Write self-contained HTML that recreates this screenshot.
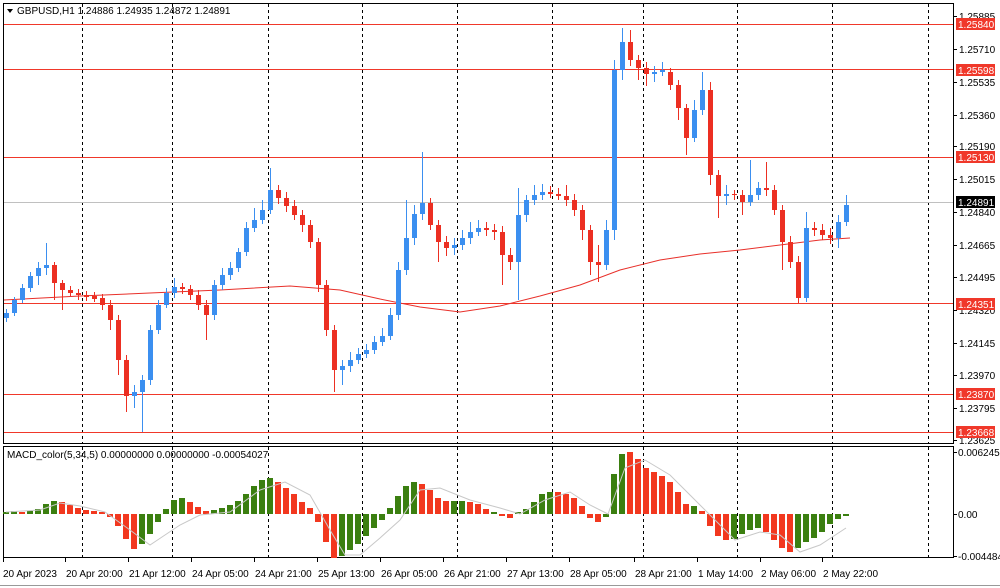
<!DOCTYPE html>
<html><head><meta charset="utf-8"><style>
html,body{margin:0;padding:0;background:#fff;width:1000px;height:588px;overflow:hidden}
svg{display:block;font-family:"Liberation Sans",Arial,sans-serif}
</style></head><body>
<svg width="1000" height="588" viewBox="0 0 1000 588" xmlns="http://www.w3.org/2000/svg" font-size="10">
<rect x="0" y="0" width="1000" height="588" fill="#fff"/>
<rect x="3.5" y="3.5" width="950" height="440" fill="none" stroke="#000"/>
<rect x="3.5" y="446.5" width="950" height="111" fill="none" stroke="#000"/>
<g stroke="#000" stroke-dasharray="3,3">
<path d="M82.5 4V443M172.5 4V443M268.5 4V443M362.5 4V443M457.5 4V443M552.5 4V443M643.5 4V443M737.5 4V443M832.5 4V443M928.5 4V443"/>
<path d="M82.5 447V557M172.5 447V557M268.5 447V557M362.5 447V557M457.5 447V557M552.5 447V557M643.5 447V557M737.5 447V557M832.5 447V557M928.5 447V557"/>
</g>
<path d="M4 24.5H953M4 69.5H953M4 157.5H953M4 303.5H953M4 394.5H953M4 432.5H953" stroke="#f0382a"/>
<path d="M4 202.5H953" stroke="#c0c0c0"/>
<polyline fill="none" stroke="#e8302a" points="4,300 80,296 150,293 220,290 290,286 340,290 380,299 420,307 460,312 500,306 540,296 580,285 620,270 660,260 700,254 740,250 780,245 820,240 850,238"/>

<!-- bull wicks & bodies -->
<path stroke="#3b8ff0" fill="none" d="M6.5 309V322M14.5 297V316M22.5 284V303M30.5 272V292M38.5 262V285M46.5 243V275M134.5 385V408M142.5 375V432M150.5 325V385M158.5 300V334M166.5 288V308M174.5 278V298M214.5 280V320M222.5 268V290M230.5 262V280M238.5 248V272M246.5 222V256M254.5 208V232M262.5 200V224M270.5 168V214M342.5 360V385M350.5 352V372M358.5 348V364M366.5 344V358M374.5 336V354M382.5 328V346M390.5 308V340M398.5 262V320M406.5 200V275M414.5 205V245M422.5 152V220M454.5 238V255M462.5 230V250M470.5 222V244M478.5 220V236M518.5 188V300M526.5 195V222M534.5 185V205M542.5 184V200M606.5 220V270M614.5 60V240M622.5 28V80M654.5 66V82M662.5 62V76M694.5 100V142M702.5 72V115M726.5 185V205M750.5 160V206M758.5 182V200M806.5 212V302M838.5 215V248M846.5 195V226"/>
<path fill="#3b8ff0" d="M4 313h5V318h-5zM12 300h5V313h-5zM20 288h5V300h-5zM28 276h5V288h-5zM36 268h5V276h-5zM44 265h5V268h-5zM132 392h5V396h-5zM140 380h5V392h-5zM148 330h5V380h-5zM156 305h5V330h-5zM164 293h5V305h-5zM172 287h5V293h-5zM212 285h5V315h-5zM220 275h5V285h-5zM228 268h5V275h-5zM236 252h5V268h-5zM244 228h5V252h-5zM252 220h5V228h-5zM260 210h5V220h-5zM268 190h5V210h-5zM340 366h5V370h-5zM348 360h5V366h-5zM356 354h5V360h-5zM364 350h5V354h-5zM372 342h5V350h-5zM380 336h5V342h-5zM388 315h5V336h-5zM396 270h5V315h-5zM404 238h5V270h-5zM412 214h5V238h-5zM420 203h5V214h-5zM452 245h5V248h-5zM460 238h5V245h-5zM468 232h5V238h-5zM476 228h5V232h-5zM516 215h5V262h-5zM524 200h5V215h-5zM532 195h5V200h-5zM540 192h5V195h-5zM604 230h5V265h-5zM612 70h5V230h-5zM620 42h5V70h-5zM652 72h5V74h-5zM660 70h5V72h-5zM692 110h5V138h-5zM700 90h5V110h-5zM724 194h5V196h-5zM748 195h5V202h-5zM756 188h5V195h-5zM804 228h5V298h-5zM836 222h5V238h-5zM844 205h5V222h-5z"/>

<!-- bear wicks & bodies -->
<path stroke="#ec2f22" fill="none" d="M54.5 262V300M62.5 280V310M70.5 286V296M78.5 289V300M86.5 291V301M94.5 292V302M102.5 294V310M110.5 300V330M118.5 315V375M126.5 355V412M182.5 283V294M190.5 285V300M198.5 290V310M206.5 300V340M278.5 185V204M286.5 192V212M294.5 200V220M302.5 210V232M310.5 220V248M318.5 238V292M326.5 280V336M334.5 325V392M430.5 198V230M438.5 220V262M446.5 236V256M486.5 222V236M494.5 224V240M502.5 226V285M510.5 248V270M550.5 186V198M558.5 188V200M566.5 185V206M574.5 194V216M582.5 205V240M590.5 225V275M598.5 245V282M630.5 30V66M638.5 55V80M646.5 62V86M670.5 68V90M678.5 80V120M686.5 104V155M710.5 82V185M718.5 170V218M734.5 190V200M742.5 190V215M766.5 162V196M774.5 185V215M782.5 205V270M790.5 236V268M798.5 256V303M814.5 222V236M822.5 224V240M830.5 228V244"/>
<path fill="#ec2f22" d="M52 265h5V283h-5zM60 283h5V290h-5zM68 290h5V293h-5zM76 293h5V295h-5zM84 295h5V297h-5zM92 296h5V299h-5zM100 298h5V305h-5zM108 305h5V320h-5zM116 320h5V360h-5zM124 360h5V396h-5zM180 287h5V289h-5zM188 289h5V295h-5zM196 295h5V305h-5zM204 305h5V315h-5zM276 190h5V198h-5zM284 198h5V206h-5zM292 206h5V215h-5zM300 215h5V225h-5zM308 225h5V242h-5zM316 242h5V285h-5zM324 285h5V330h-5zM332 330h5V370h-5zM428 203h5V225h-5zM436 225h5V242h-5zM444 242h5V248h-5zM484 228h5V230h-5zM492 230h5V232h-5zM500 232h5V255h-5zM508 255h5V262h-5zM548 192h5V194h-5zM556 194h5V196h-5zM564 196h5V200h-5zM572 200h5V210h-5zM580 210h5V230h-5zM588 230h5V262h-5zM596 262h5V265h-5zM628 42h5V60h-5zM636 60h5V68h-5zM644 68h5V74h-5zM668 72h5V85h-5zM676 85h5V108h-5zM684 108h5V138h-5zM708 90h5V175h-5zM716 175h5V196h-5zM732 194h5V195h-5zM740 195h5V202h-5zM764 188h5V190h-5zM772 190h5V210h-5zM780 210h5V242h-5zM788 242h5V262h-5zM796 262h5V298h-5zM812 228h5V230h-5zM820 230h5V235h-5zM828 235h5V238h-5z"/>

<!-- MACD green -->
<path fill="#3b7f10" d="M3 512h6v2h-6zM11 511h6v3h-6zM27 511h6v3h-6zM35 509h6v5h-6zM43 504h6v10h-6zM51 501h6v13h-6zM139 514h6v30h-6zM147 514h6v20h-6zM155 514h6v8h-6zM163 509h6v5h-6zM171 500h6v14h-6zM179 498h6v16h-6zM211 510h6v4h-6zM219 508h6v6h-6zM227 505h6v9h-6zM235 501h6v13h-6zM243 494h6v20h-6zM251 486h6v28h-6zM259 480h6v34h-6zM267 478h6v36h-6zM339 514h6v42h-6zM347 514h6v36h-6zM355 514h6v30h-6zM363 514h6v22h-6zM371 514h6v14h-6zM379 514h6v6h-6zM387 508h6v6h-6zM395 496h6v18h-6zM403 486h6v28h-6zM411 482h6v32h-6zM451 501h6v13h-6zM459 501h6v13h-6zM491 512h6v2h-6zM515 512h6v2h-6zM523 509h6v5h-6zM531 502h6v12h-6zM539 494h6v20h-6zM547 492h6v22h-6zM603 514h6v3h-6zM611 474h6v40h-6zM619 454h6v60h-6zM691 506h6v8h-6zM731 514h6v25h-6zM739 514h6v20h-6zM747 514h6v16h-6zM755 514h6v14h-6zM795 514h6v34h-6zM803 514h6v28h-6zM811 514h6v24h-6zM819 514h6v18h-6zM827 514h6v10h-6zM835 514h6v5h-6zM843 514h6v2h-6z"/>
<!-- MACD red -->
<path fill="#f2381f" d="M19 512h6v2h-6zM59 502h6v12h-6zM67 505h6v9h-6zM75 508h6v6h-6zM83 510h6v4h-6zM91 511h6v3h-6zM99 512h6v2h-6zM107 514h6v3h-6zM115 514h6v12h-6zM123 514h6v25h-6zM131 514h6v35h-6zM187 502h6v12h-6zM195 507h6v7h-6zM203 511h6v3h-6zM275 482h6v32h-6zM283 488h6v26h-6zM291 494h6v20h-6zM299 502h6v12h-6zM307 508h6v6h-6zM315 514h6v8h-6zM323 514h6v28h-6zM331 514h6v44h-6zM419 484h6v30h-6zM427 490h6v24h-6zM435 498h6v16h-6zM443 501h6v13h-6zM467 502h6v12h-6zM475 504h6v10h-6zM483 509h6v5h-6zM499 514h6v2h-6zM507 514h6v4h-6zM555 492h6v22h-6zM563 494h6v20h-6zM571 498h6v16h-6zM579 506h6v8h-6zM587 514h6v4h-6zM595 514h6v8h-6zM627 452h6v62h-6zM635 459h6v55h-6zM643 468h6v46h-6zM651 472h6v42h-6zM659 476h6v38h-6zM667 482h6v32h-6zM675 492h6v22h-6zM683 504h6v10h-6zM699 511h6v3h-6zM707 514h6v12h-6zM715 514h6v22h-6zM723 514h6v26h-6zM763 514h6v18h-6zM771 514h6v26h-6zM779 514h6v34h-6zM787 514h6v38h-6z"/>
<polyline fill="none" stroke="#c8c8c8" points="6,512 40,510 60,503 80,506 105,512 130,530 150,545 165,535 180,525 200,515 230,512 260,490 285,482 310,495 330,530 345,555 360,555 380,538 400,520 420,490 440,488 470,500 500,508 520,514 545,500 570,492 590,505 608,514 625,468 645,460 670,475 690,495 710,515 735,540 760,532 780,535 800,552 820,545 846,528"/>

<!-- price axis -->
<path stroke="#000" d="M954 16.5h3M954 49.5h3M954 82.5h3M954 115.5h3M954 146.5h3M954 179.5h3M954 212.5h3M954 245.5h3M954 277.5h3M954 310.5h3M954 343.5h3M954 375.5h3M954 408.5h3M954 440.5h3M954 452.5h3M954 514.5h3M954 556.5h3"/>
<g fill="#000">
<text x="959" y="20">1.25885</text><text x="959" y="53">1.25710</text><text x="959" y="86">1.25535</text><text x="959" y="119">1.25360</text><text x="959" y="150">1.25190</text><text x="959" y="183">1.25015</text><text x="959" y="216">1.24840</text><text x="959" y="249">1.24665</text><text x="959" y="281">1.24495</text><text x="959" y="314">1.24320</text><text x="959" y="347">1.24145</text><text x="959" y="379">1.23970</text><text x="959" y="412">1.23795</text><text x="959" y="444">1.23625</text>
<text x="958" y="456">0.0062457</text><text x="958" y="518">0.00</text><text x="958" y="560">-0.004484</text>
</g>
<g fill="#f0382a"><rect x="956" y="18" width="39" height="12"/><rect x="956" y="64" width="39" height="12"/><rect x="956" y="151" width="39" height="12"/><rect x="956" y="298" width="39" height="12"/><rect x="956" y="388" width="39" height="12"/><rect x="956" y="426" width="39" height="12"/></g>
<rect x="956" y="196" width="39" height="12" fill="#000"/>
<g fill="#fff"><text x="958" y="28">1.25840</text><text x="958" y="74">1.25598</text><text x="958" y="161">1.25130</text><text x="958" y="308">1.24351</text><text x="958" y="398">1.23870</text><text x="958" y="436">1.23668</text><text x="958" y="206">1.24891</text></g>

<!-- time axis -->
<path stroke="#000" d="M3.5 558v4M65.5 558v4M128.5 558v4M191.5 558v4M254.5 558v4M317.5 558v4M380.5 558v4M443.5 558v4M506.5 558v4M569.5 558v4M634.5 558v4M697.5 558v4M760.5 558v4M822.5 558v4"/>
<g fill="#000">
<text x="3" y="577">20 Apr 2023</text><text x="66" y="577">20 Apr 20:00</text><text x="129" y="577">21 Apr 12:00</text><text x="192" y="577">24 Apr 05:00</text><text x="255" y="577">24 Apr 21:00</text><text x="318" y="577">25 Apr 13:00</text><text x="381" y="577">26 Apr 05:00</text><text x="444" y="577">26 Apr 21:00</text><text x="507" y="577">27 Apr 13:00</text><text x="570" y="577">28 Apr 05:00</text><text x="635" y="577">28 Apr 21:00</text><text x="698" y="577">1 May 14:00</text><text x="761" y="577">2 May 06:00</text><text x="823" y="577">2 May 22:00</text>
<path d="M7 9 L13 9 L10 13 Z"/>
<text x="17" y="14">GBPUSD,H1  1.24886 1.24935 1.24872 1.24891</text>
<text x="7" y="458">MACD_color(5,34,5) 0.00000000 0.00000000 -0.00054027</text>
</g>
<path d="M0 585.5H1000" stroke="#999"/>
</svg>
</body></html>
